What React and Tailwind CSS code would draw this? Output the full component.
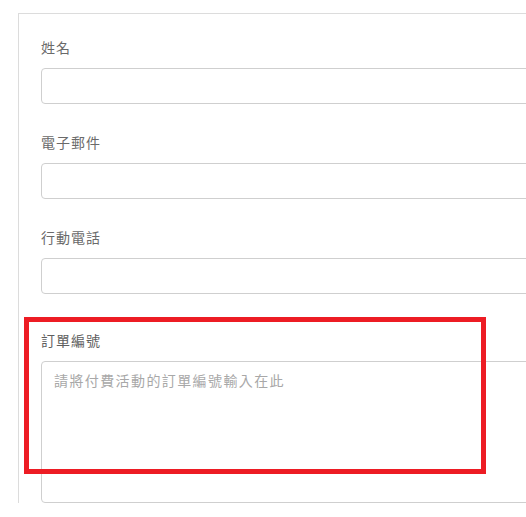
export default function App() {
  const fields = [
    { label: '姓名', gap: 'mb-[28px]' },
    { label: '電子郵件', gap: 'mb-[28px]' },
    { label: '行動電話', gap: 'mb-[36px]' },
  ]

  return (
    <div
      className="relative h-[517px] w-[526px] overflow-hidden bg-white"
      style={{ fontFamily: '"Noto Sans CJK TC", "Noto Sans", sans-serif' }}
    >
      <div className="ml-[18px] mt-[13px] w-[600px] border-l border-t border-[#dcdcdc] bg-white pl-[22px] pt-[23px]">
        {fields.map(f => (
          <div key={f.label} className={f.gap}>
            <label className="mb-[11px] block text-[14px] leading-5 tracking-[1px] text-[#6a6a6a]">{f.label}</label>
            <input
              type="text"
              className="block h-[36px] w-[560px] rounded-[4px] border border-[#cfcfcf] bg-white px-3 outline-none"
            />
          </div>
        ))}
        <div>
          <label className="mb-[11px] block text-[14px] leading-5 tracking-[1px] text-[#5e5e5e]">訂單編號</label>
          <textarea
            placeholder="請將付費活動的訂單編號輸入在此"
            className="block h-[142px] w-[560px] resize-none rounded-[4px] border border-[#cfcfcf] bg-white px-3 pt-2 text-[14px] leading-5 tracking-[1.4px] outline-none placeholder:text-[#a8a8a8]"
          />
        </div>
      </div>

      <div className="absolute left-[24px] top-[317px] h-[157px] w-[462px] border-[5px] border-[#ed1c24]" />
    </div>
  )
}
